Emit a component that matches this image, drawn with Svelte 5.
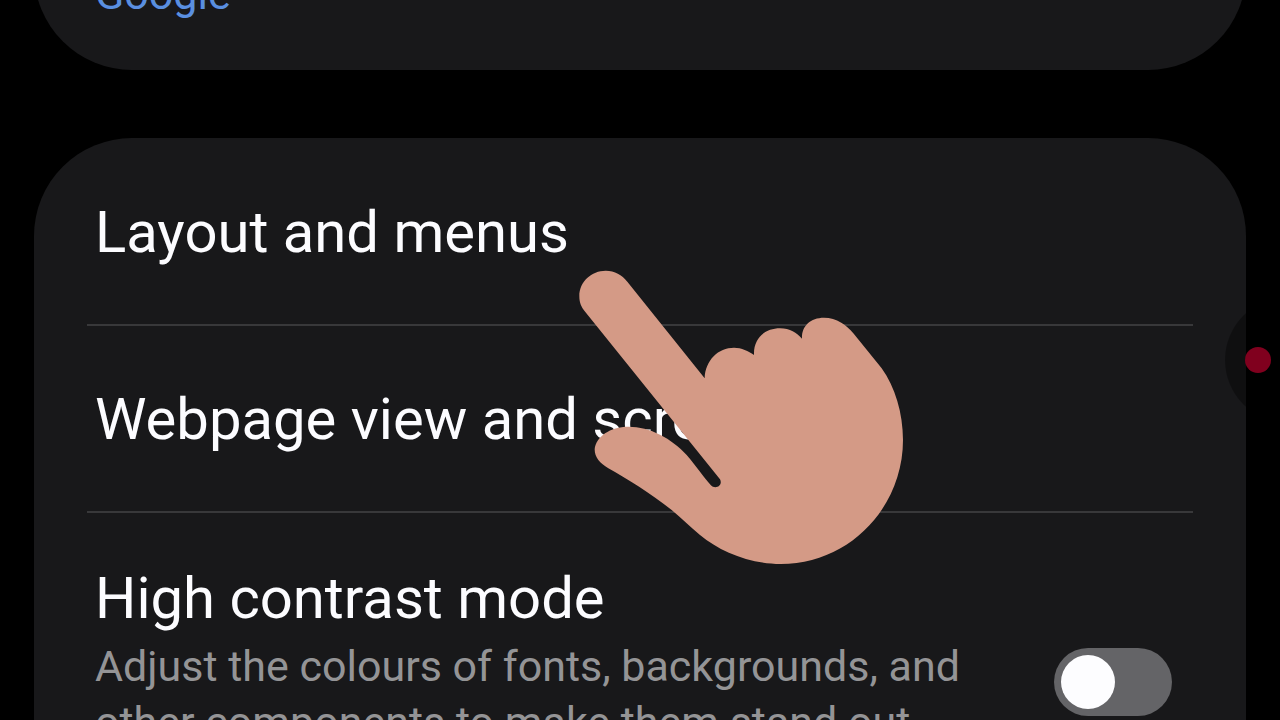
<script lang="ts">
	let highContrast = $state(false);

	const links = ['Layout and menus', 'Webpage view and scrolling'];
</script>

<main class="screen">
	<section class="card search">
		<button class="value">Google</button>
	</section>

	<section class="card">
		{#each links as link}
			<button class="row link">{link}</button>
		{/each}

		<div class="row setting">
			<div class="copy">
				<label for="contrast">High contrast mode</label>
				<p id="contrast-info">
					Adjust the colours of fonts, backgrounds, and other components to make them stand out
				</p>
			</div>
			<input
				id="contrast"
				class="switch"
				type="checkbox"
				role="switch"
				aria-describedby="contrast-info"
				bind:checked={highContrast}
			/>
		</div>
	</section>

	<button class="edge" aria-label="Recorder"><span class="dot"></span></button>

	<svg class="hand" viewBox="0 0 1080 990" aria-hidden="true">
		<path
			d="M76 186C63 170 58 158 58 138C58 95 95 62 137 62C165 62 185 74 202 95L434 385C436 330 475 293 522 293C545 293 565 303 582 315C580 265 615 235 660 235C690 235 710 248 726 266C724 230 750 203 792 203C830 203 860 225 880 250L965 355C1005 410 1029 490 1029 570C1029 770 870 942 662 942C570 942 480 905 420 855C390 830 365 805 335 780C270 730 200 685 145 655C120 640 104 622 104 598C108 560 150 530 205 530C270 530 335 565 380 615C410 650 430 680 452 705C465 720 490 708 480 688Z"
		/>
	</svg>
</main>

<style>
	:global(body) {
		margin: 0;
		background: #000;
	}

	.screen {
		position: relative;
		display: flex;
		flex-direction: column;
		gap: 68px;
		box-sizing: border-box;
		height: 100vh;
		padding: 0 34px;
		overflow: hidden;
		background: #000;
		color: #fcfcff;
		font-family: Roboto, sans-serif;
		font-size: 58px;
		line-height: 68px;
	}

	.card {
		flex-shrink: 0;
		padding: 1px 53px 96px;
		border-radius: 98px;
		background: #18181a;
	}

	/* the list is scrolled, only the end of this card is in view */
	.search {
		margin-top: -130px;
		padding-top: 96px;
		padding-bottom: 48px;
	}

	button {
		padding: 0;
		border: 0;
		background: none;
		color: inherit;
		font: inherit;
		text-align: left;
		cursor: pointer;
	}

	.value {
		display: block;
		padding: 0 8px;
		color: #5a8fe0;
		font-size: 43px;
		line-height: 56px;
	}

	.row {
		box-sizing: border-box;
		width: 100%;
		padding: 0 8px;
	}

	.link {
		display: block;
		height: 187px;
		border-bottom: 2px solid #38383a;
	}

	.setting {
		display: flex;
		align-items: flex-start;
		justify-content: space-between;
		padding-top: 51px;
		padding-right: 21px;
	}

	.copy {
		width: 890px;
	}

	label {
		display: block;
	}

	p {
		margin: 6px 0 0;
		color: #949496;
		font-size: 43px;
		line-height: 56px;
	}

	.switch {
		flex-shrink: 0;
		appearance: none;
		box-sizing: border-box;
		width: 118px;
		height: 68px;
		margin: 84px 0 0;
		padding: 7px;
		border-radius: 34px;
		background: #646467;
		cursor: pointer;
	}

	.switch::before {
		content: '';
		display: block;
		width: 54px;
		height: 54px;
		border-radius: 50%;
		background: #fdfdff;
	}

	.switch:checked {
		background: #3e7bfa;
	}

	.switch:checked::before {
		margin-left: auto;
	}

	.edge {
		position: absolute;
		top: 50%;
		right: -71px;
		width: 126px;
		height: 126px;
		margin-top: -63px;
		border-radius: 50%;
		background: rgb(0 0 0 / 35%);
	}

	.dot {
		display: block;
		width: 26px;
		height: 26px;
		margin-left: 20px;
		border-radius: 50%;
		background: #80001e;
	}

	.hand {
		position: absolute;
		top: 250px;
		left: 560px;
		width: 360px;
		height: 330px;
		fill: #d49a86;
		pointer-events: none;
	}
</style>
